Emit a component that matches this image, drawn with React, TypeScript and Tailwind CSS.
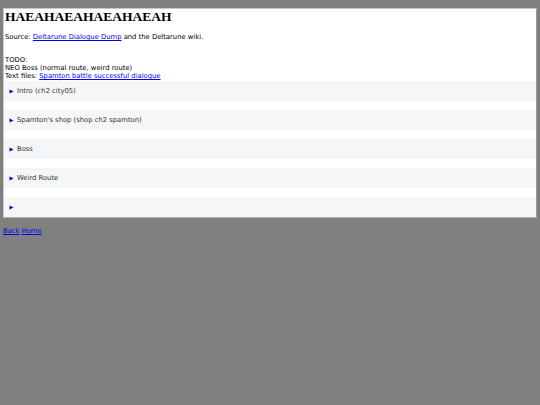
import React from 'react';

const sections = ['Intro (ch2 city05)', "Spamton's shop (shop ch2 spamton)", 'Boss', 'Weird Route', ''];

const Row: React.FC<{ label: string }> = ({ label }) => (
  <div className="h-[20px] bg-[#f5f6f8] flex items-center pl-[5px] gap-[3px] text-[#333]">
    <svg width="5" height="5" viewBox="0 0 5 5" className="shrink-0">
      <path d="M0.5 0.5 L4.5 2.5 L0.5 4.5 Z" fill="#0000cc" />
    </svg>
    <span>{label}</span>
  </div>
);

export default function App() {
  return (
    <div
      className="min-h-[405px] w-[540px] bg-[#808080] pt-[8px] px-[3px] text-[6.8px] leading-[8px] text-black"
      style={{ fontFamily: '"DejaVu Sans", Verdana, sans-serif' }}
    >
      <div className="bg-white border border-[#c8c8c8] border-r-[#9a9a9a] border-b-[#b0b0b0]">
        <h1 className="text-[13.5px] leading-[16px] font-bold pl-[1px]" style={{ fontFamily: '"Liberation Serif", "Times New Roman", serif' }}>
          HAEAHAEAHAEAHAEAH
        </h1>
        <p className="mt-[8px] pl-[1px]">
          Source: <a className="text-[#0000ee] underline">Deltarune Dialogue Dump</a> and the Deltarune wiki.
        </p>
        <p className="mt-[15px] pl-[1px]">
          TODO:<br />
          NEO Boss (normal route, weird route)<br />
          Text files: <a className="text-[#0000ee] underline">Spamton battle successful dialogue</a>
        </p>
        <div className="flex flex-col gap-[9px] mt-[1px]">
          {sections.map((s, i) => (
            <Row key={i} label={s} />
          ))}
        </div>
      </div>
      <div className="mt-[9px] flex gap-[2px]">
        <a className="text-[#0000ee] underline">Back</a>
        <a className="text-[#0000ee] underline">Home</a>
      </div>
    </div>
  );
}
